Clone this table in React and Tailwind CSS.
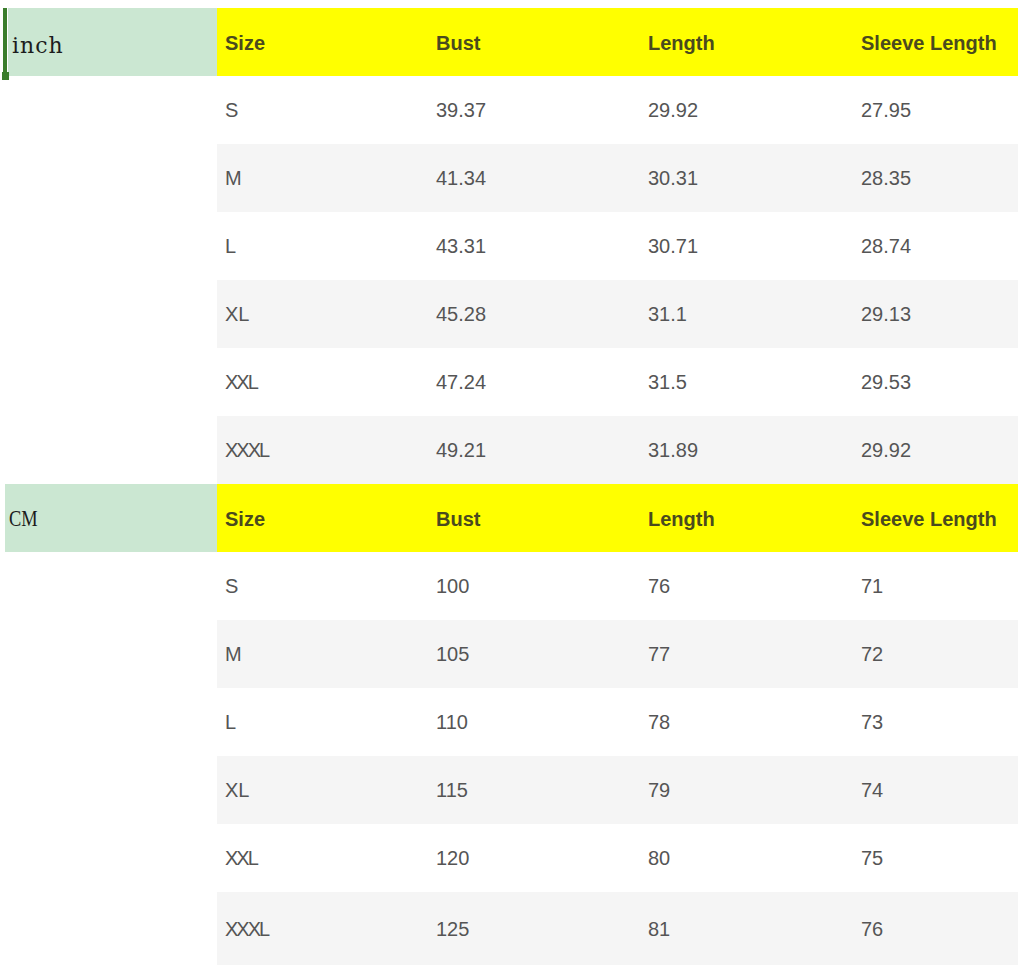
import React from 'react';

const INCH = [
  ['S', '39.37', '29.92', '27.95'],
  ['M', '41.34', '30.31', '28.35'],
  ['L', '43.31', '30.71', '28.74'],
  ['XL', '45.28', '31.1', '29.13'],
  ['XXL', '47.24', '31.5', '29.53'],
  ['XXXL', '49.21', '31.89', '29.92'],
];

const CM = [
  ['S', '100', '76', '71'],
  ['M', '105', '77', '72'],
  ['L', '110', '78', '73'],
  ['XL', '115', '79', '74'],
  ['XXL', '120', '80', '75'],
  ['XXXL', '125', '81', '76'],
];

const HEAD = ['Size', 'Bust', 'Length', 'Sleeve Length'];
const COLS = 'grid grid-cols-[213px_212px_213px_1fr]';

function Section({ unit, rows, first }) {
  return (
    <div>
      <div className="flex h-[68px]">
        <div className="w-[217px] shrink-0 flex">
          <div
            className={`relative flex-1 flex items-center bg-[#cbe7d2] ${first ? 'ml-[8px] pl-[4px]' : 'ml-[5px] pl-[4px]'}`}
          >
            {first && (
              <div className="absolute left-[-5px] top-0 h-[66px] w-[4px] bg-[#3b7d2c]">
                <div className="absolute top-[64px] left-[-1px] h-[8px] w-[7px] bg-[#3b7d2c]" />
              </div>
            )}
            {first ? (
              <span
                className="text-[22px] tracking-[1px] text-[#1c1c1c] pt-[6px]"
                style={{ fontFamily: '"DejaVu Serif", serif' }}
              >
                {unit}
              </span>
            ) : (
              <span
                className="text-[23px] text-[#1c1c1c] scale-x-[0.8] origin-left pt-[2px]"
                style={{ fontFamily: '"Liberation Serif", serif' }}
              >
                {unit}
              </span>
            )}
          </div>
        </div>
        <div className={`${COLS} flex-1 bg-[#ffff00] items-center pt-[2px]`}>
          {HEAD.map((h, i) => (
            <div key={h} className={`font-bold text-[20px] text-[#4a4a1e] ${i === 0 ? 'pl-[8px]' : 'pl-[6px]'}`}>
              {h}
            </div>
          ))}
        </div>
      </div>
      {rows.map((r, ri) => (
        <div key={r[0]} className={`flex ${!first && ri === rows.length - 1 ? 'h-[73px]' : 'h-[68px]'}`}>
          <div className="w-[217px] shrink-0" />
          <div className={`${COLS} flex-1 items-center ${ri % 2 ? 'bg-[#f5f5f5]' : 'bg-white'}`}>
            {r.map((c, i) => (
              <div
                key={i}
                className={`text-[20px] text-[#555555] ${i === 0 ? 'pl-[8px]' : 'pl-[6px]'} ${i === 0 && c.length > 2 ? 'tracking-[-2px]' : ''}`}
              >
                {c}
              </div>
            ))}
          </div>
        </div>
      ))}
    </div>
  );
}

export default function App() {
  return (
    <div
      className="w-[1020px] h-[970px] bg-white pt-[8px] pr-[2px] overflow-hidden"
      style={{ fontFamily: '"Liberation Sans", Arial, sans-serif' }}
    >
      <Section unit="inch" rows={INCH} first />
      <Section unit="CM" rows={CM} />
    </div>
  );
}
